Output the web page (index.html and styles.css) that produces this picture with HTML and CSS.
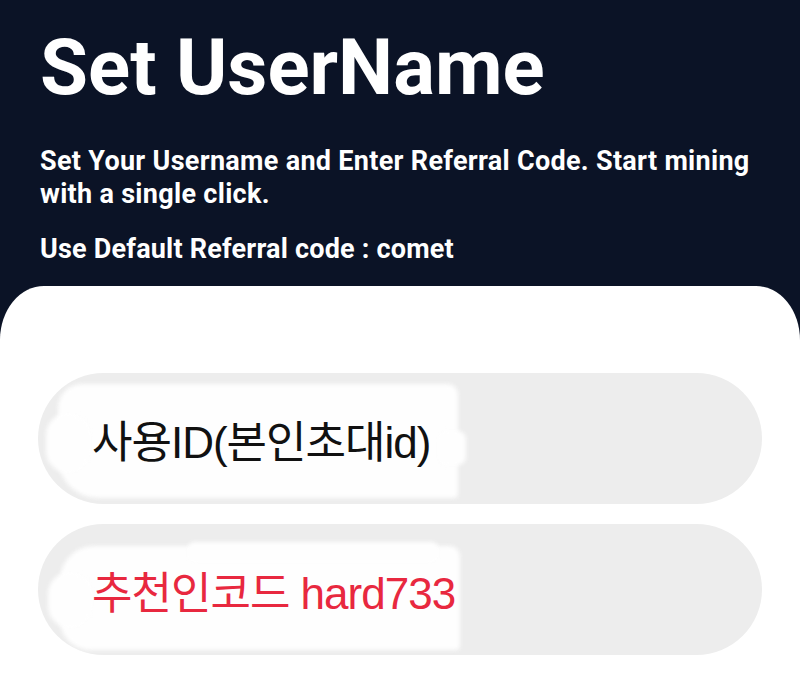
FILE: index.html
```html
<!DOCTYPE html>
<html lang="en">
<head>
<meta charset="utf-8">
<title>Set UserName</title>
<link rel="stylesheet" href="styles.css">
</head>
<body>
<div class="page">
  <header class="hero">
    <h1 class="title">Set UserName</h1>
    <p class="lead">Set Your Username and Enter Referral Code. Start mining with a single click.</p>
    <p class="hint">Use Default Referral code : comet</p>
  </header>
  <main class="card">
    <div class="field">
      <span class="patch patch-a"></span>
      <span class="patch patch-b"></span>
      <span class="patch patch-e"></span>
      <span class="field-text">사용ID(본인초대id)</span>
    </div>
    <div class="field">
      <span class="patch patch-c"></span>
      <span class="patch patch-d"></span>
      <span class="patch patch-f"></span>
      <span class="field-text red">추천인코드 hard733</span>
    </div>
  </main>
</div>
</body>
</html>
```

FILE: styles.css
```css
* { box-sizing: border-box; }
html, body {
  margin: 0;
  padding: 0;
  background: #0b1326;
  height: 100%;
  overflow: hidden;
}
.page {
  display: flex;
  flex-direction: column;
  min-height: 681px;
}
.hero {
  padding: 22px 40px 0 40px;
  color: #ffffff;
  font-family: Roboto, "Noto Sans", sans-serif;
}
.title {
  margin: 0;
  font-size: 78px;
  font-weight: 700;
  line-height: 92px;
  letter-spacing: 0;
}
.lead {
  margin: 31px 0 0 0;
  font-size: 27px;
  font-weight: 700;
  line-height: 33px;
  letter-spacing: 0.3px;
  max-width: 725px;
}
.hint {
  margin: 22px 0 0 0;
  font-size: 27px;
  font-weight: 700;
  line-height: 33px;
  letter-spacing: 0.2px;
}
.card {
  margin-top: 20px;
  flex: 1;
  background: #ffffff;
  border-radius: 44px 44px 0 0 / 54px 54px 0 0;
  padding: 87px 38px 0 38px;
  display: flex;
  flex-direction: column;
  gap: 20px;
}
.field {
  position: relative;
  height: 131px;
  border-radius: 66px;
  background: #ededed;
  display: flex;
  align-items: center;
  padding-left: 54px;
  overflow: hidden;
}
.patch {
  position: absolute;
  background: #fefefe;
  filter: blur(2px);
}
.patch-a { left: 20px; top: 11px; width: 400px; height: 114px; border-radius: 24px 10px 4px 40px; }
.patch-b { left: 8px; top: 40px; width: 44px; height: 60px; border-radius: 22px; }
.patch-e { left: 400px; top: 58px; width: 28px; height: 34px; border-radius: 8px; }
.patch-c { left: 22px; top: 22px; width: 400px; height: 104px; border-radius: 34px 10px 4px 30px; }
.patch-d { left: 10px; top: 48px; width: 44px; height: 56px; border-radius: 22px; }
.patch-f { left: 150px; top: 18px; width: 250px; height: 20px; border-radius: 6px; }
.field-text {
  position: relative;
  font-family: "Liberation Sans", "Noto Sans CJK KR", sans-serif;
  font-size: 44px;
  font-weight: 400;
  color: #111111;
  letter-spacing: -1px;
}
.field-text.red { color: #e8283f; }
```
